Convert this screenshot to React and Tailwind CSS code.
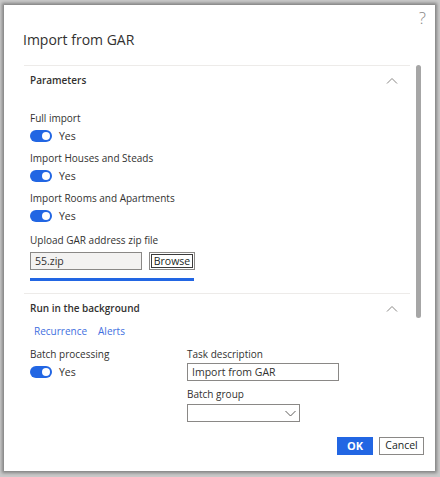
import React from "react";

const font = { fontFamily: '"Open Sans", "Noto Sans", sans-serif' };

function Toggle() {
  return (
    <div className="flex items-center h-[16px]">
      <div className="w-[22px] h-[12px] rounded-full bg-[#2266e3] flex items-center justify-end pr-[2px]">
        <div className="w-[8px] h-[8px] rounded-full bg-white" />
      </div>
      <span className="ml-[7px] text-[10.5px] text-[#323130] leading-[16px]">Yes</span>
    </div>
  );
}

function Chevron() {
  return (
    <svg width="12" height="8" viewBox="0 0 12 8" className="mr-[12px]">
      <path d="M1 6.5 L6 1.5 L11 6.5" fill="none" stroke="#8a8886" strokeWidth="1" />
    </svg>
  );
}

function Field({ label, mt = "mt-0" }) {
  return (
    <div className={mt}>
      <div className="text-[10px] leading-[16px] text-[#323130]">{label}</div>
      <div className="mt-[2px]">
        <Toggle />
      </div>
    </div>
  );
}

export default function App() {
  return (
    <div className="w-[440px] h-[477px] bg-[#c9c9c9] pt-[5px] pl-[4px] pr-[5px] pb-[6px]" style={font}>
      <div className="w-full h-full bg-white shadow-[0_0_3px_2px_rgba(0,0,0,0.35)] flex flex-col">
        <div className="flex justify-end h-[24px] pr-[9px] pt-[2px]">
          <span className="text-[17px] leading-[22px] text-[#8a8886] font-light">?</span>
        </div>
        <div className="pl-[19px] h-[36px] text-[14px] leading-[22px] text-[#323130]">Import from GAR</div>
        <div className="flex flex-1">
          <div className="ml-[20px] w-[386px]">
            <div className="border-t border-[#edebe9]">
              <div className="h-[29px] flex items-center justify-between pl-[6px]">
                <span className="text-[10px] font-semibold text-[#323130]">Parameters</span>
                <Chevron />
              </div>
              <div className="pl-[6px] pt-[15px] pb-[12px]">
                <Field label="Full import" />
                <Field label="Import Houses and Steads" mt="mt-[6px]" />
                <Field label="Import Rooms and Apartments" mt="mt-[6px]" />
                <div className="mt-[8px] text-[10px] leading-[16px] text-[#323130]">Upload GAR address zip file</div>
                <div className="mt-[4px] flex items-center">
                  <div className="w-[112px] h-[18px] bg-[#f3f2f1] border border-[#8a8886] text-[10.5px] leading-[16px] pl-[4px] text-[#323130]">
                    55.zip
                  </div>
                  <div className="ml-[7px] w-[46px] h-[18px] border border-[#8a8886] p-[1px] flex">
                    <div className="flex-1 border border-[#3b3b3b] flex items-center justify-center text-[10.5px] leading-[14px] text-[#201f1e]">
                      Browse
                    </div>
                  </div>
                </div>
                <div className="mt-[8px] w-[164px] h-[3px] bg-[#2266e3]" />
              </div>
            </div>
            <div className="border-t border-[#edebe9]">
              <div className="h-[29px] flex items-center justify-between pl-[6px]">
                <span className="text-[10px] font-semibold text-[#323130]">Run in the background</span>
                <Chevron />
              </div>
              <div className="pl-[10px] flex gap-[11px] h-[16px] items-center text-[10px] text-[#3f6fe0]">
                <span>Recurrence</span>
                <span>Alerts</span>
              </div>
              <div className="pl-[6px] pt-[7px] flex">
                <div className="w-[157px]">
                  <Field label="Batch processing" />
                </div>
                <div>
                  <div className="text-[10px] leading-[16px] text-[#323130]">Task description</div>
                  <div className="mt-[1px] w-[152px] h-[18px] border border-[#8a8886] text-[10.5px] leading-[16px] pl-[4px] text-[#323130]">
                    Import from GAR
                  </div>
                  <div className="mt-[5px] text-[10px] leading-[16px] text-[#323130]">Batch group</div>
                  <div className="mt-[2px] w-[113px] h-[18px] border border-[#8a8886] flex items-center justify-end pr-[3px]">
                    <svg width="11" height="7" viewBox="0 0 11 7">
                      <path d="M0.5 1 L5.5 6 L10.5 1" fill="none" stroke="#605e5c" strokeWidth="1" />
                    </svg>
                  </div>
                </div>
              </div>
            </div>
          </div>
          <div className="ml-[6px] w-[5px] h-[253px] rounded-full bg-[#a6a6a6]" />
        </div>
        <div className="flex justify-end gap-[6px] pr-[11px] pb-[16px]">
          <div className="w-[36px] h-[18px] bg-[#2266e3] text-white text-[11px] font-bold flex items-center justify-center">OK</div>
          <div className="w-[45px] h-[18px] border border-[#8a8886] text-[#201f1e] text-[10.5px] flex items-center justify-center">Cancel</div>
        </div>
      </div>
    </div>
  );
}
